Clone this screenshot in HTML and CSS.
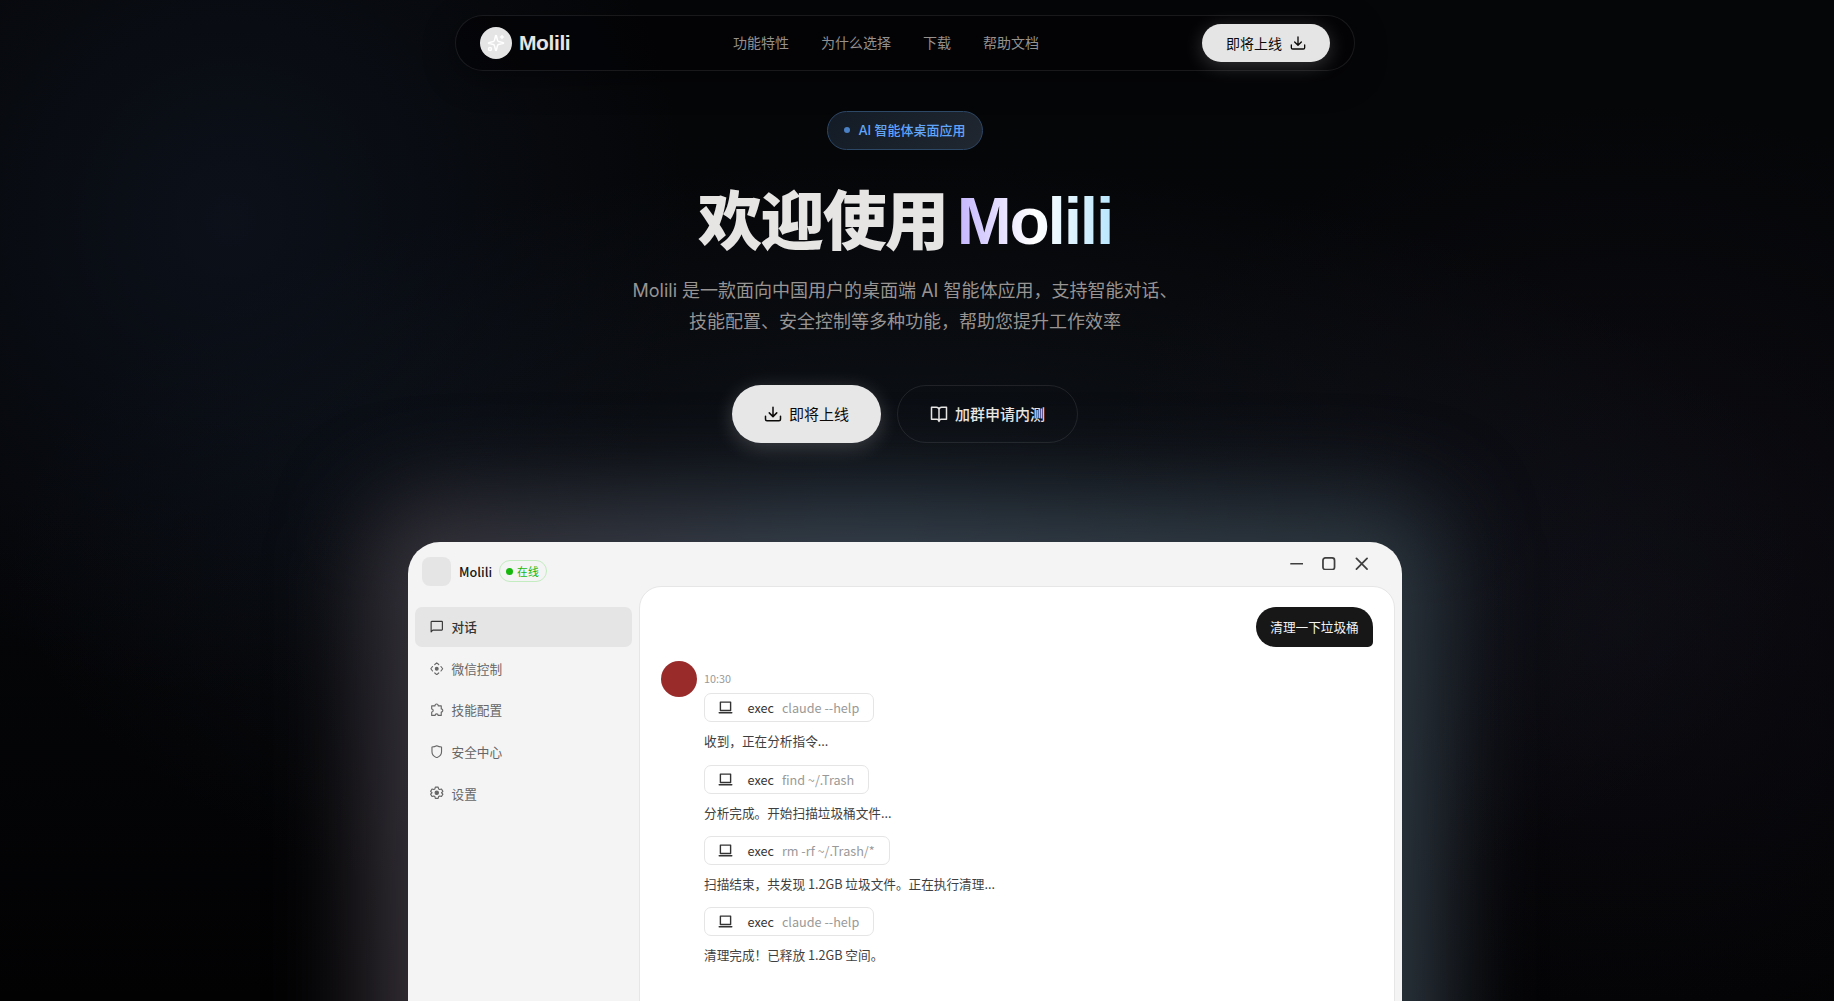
FILE: index.html
```html
<!DOCTYPE html>
<html lang="zh-CN">
<head>
  <meta charset="UTF-8">
  <title>Molili</title>
  <link rel="stylesheet" href="styles.css">
</head>
<body>
  <svg width="0" height="0" class="defs">
    <symbol id="i-download" viewBox="0 0 24 24"><path d="M12 3v12M7 10.5l5 5 5-5M2 15v4a2 2 0 0 0 2 2h16a2 2 0 0 0 2-2v-4"/></symbol>
    <symbol id="i-laptop" viewBox="0 0 16 14"><path d="M2.500 1.200h11v9h-11zM1.200 12.600h13.600"/></symbol>
  </svg>

  <div class="page">
    <header class="header">
      <a class="logo" href="#">
        <span class="logo-mark">
          <svg viewBox="0 0 24 24"><path d="M9.900 15.500A2 2 0 0 0 8.500 14l-6.100-1.500a.5.5 0 0 1 0-1L8.500 10A2 2 0 0 0 9.900 8.500l1.600-6.100a.5.5 0 0 1 1 0L14 8.500a2 2 0 0 0 1.500 1.500l6.100 1.500a.5.5 0 0 1 0 1L15.500 14a2 2 0 0 0-1.500 1.500l-1.500 6.100a.5.5 0 0 1-1 0zM20 2v4M22 4h-4"/><circle cx="4" cy="20" r="2"/></svg>
        </span>
        Molili
      </a>
      <nav class="nav">
        <a href="#">功能特性</a>
        <a href="#">为什么选择</a>
        <a href="#">下载</a>
        <a href="#">帮助文档</a>
      </nav>
      <a class="btn-small" href="#">即将上线 <svg><use href="#i-download"/></svg></a>
    </header>

    <section class="hero">
      <div class="badge"><i></i>AI 智能体桌面应用</div>
      <h1>欢迎使用 <span>Molili</span></h1>
      <p>Molili 是一款面向中国用户的桌面端 AI 智能体应用，支持智能对话、<br>技能配置、安全控制等多种功能，帮助您提升工作效率</p>
      <div class="actions">
        <a class="btn primary" href="#"><svg><use href="#i-download"/></svg>即将上线</a>
        <a class="btn ghost" href="#"><svg viewBox="0 0 24 24"><path d="M12 6v16M12 6a3.500 3.500 0 0 0-3.500-3H2v16h7a3 3 0 0 1 3 3 3 3 0 0 1 3-3h7V3h-6.500A3.500 3.500 0 0 0 12 6z"/></svg>加群申请内测</a>
      </div>
    </section>

    <div class="preview">
      <div class="glow"></div>
      <div class="window">
        <aside class="sidebar">
          <div class="brand">
            <span class="brand-icon"></span>
            <b>Molili</b>
            <span class="status"><i></i>在线</span>
          </div>
          <ul class="menu">
            <li class="active"><svg viewBox="0 0 24 24"><path d="M2 21V3.500A1 1 0 0 1 3 2.500h18a1 1 0 0 1 1 1V17a1 1 0 0 1-1 1H5z"/></svg><span>对话</span></li>
            <li><svg viewBox="0 0 24 24"><path d="M8.500 4.500L12 1.500l3.500 3M8.500 19.500l3.500 3 3.500-3M4.500 8l-3 4 3 4M19.500 8l3 4-3 4"/><circle class="fill" cx="12" cy="12" r="2.500"/></svg><span>微信控制</span></li>
            <li><svg viewBox="0 0 24 24"><path d="M3 5h6a2.800 2.800 0 1 1 5.500 0H20v5.500a2.700 2.700 0 1 1 0 5.400V22h-5.500a2.700 2.700 0 0 0-5.400 0H3v-6a2.700 2.700 0 0 0 0-5.400z"/></svg><span>技能配置</span></li>
            <li><svg viewBox="0 0 24 24"><path d="M12 1.500c3 1.500 6 2 8.500 2V12c0 5-3.500 8.500-8.500 10.500C7 20.500 3.500 17 3.500 12V3.500c2.500 0 5.500-.5 8.500-2z"/></svg><span>安全中心</span></li>
            <li><svg viewBox="0 0 24 24"><path d="M9.500 2h5l.8 3.200 2 1.100 3.100-1 2.500 4.200L20.500 12l2.400 2.500-2.500 4.200-3.100-1-2 1.100-.8 3.200h-5l-.8-3.200-2-1.100-3.100 1-2.500-4.200L3.500 12 1.100 9.500l2.500-4.200 3.100 1 2-1.100z"/><circle class="fill" cx="12" cy="12" r="3"/></svg><span>设置</span></li>
          </ul>
        </aside>
        <div class="content">
          <div class="controls">
            <svg viewBox="0 0 14 14"><path d="M1 7h12"/></svg>
            <svg viewBox="0 0 14 14"><rect x="1" y="1" width="12" height="12" rx="2.500"/></svg>
            <svg viewBox="0 0 14 14"><path d="M1.500 1.500l11 11M12.500 1.500l-11 11"/></svg>
          </div>
          <div class="chat">
            <div class="bubble">清理一下垃圾桶</div>
            <div class="reply">
              <div class="avatar"></div>
              <div class="steps">
                <time>10:30</time>
                <div class="cmd"><svg><use href="#i-laptop"/></svg><b>exec</b>claude --help</div>
                <p>收到，正在分析指令...</p>
                <div class="cmd"><svg><use href="#i-laptop"/></svg><b>exec</b>find ~/.Trash</div>
                <p>分析完成。开始扫描垃圾桶文件...</p>
                <div class="cmd"><svg><use href="#i-laptop"/></svg><b>exec</b>rm -rf ~/.Trash/*</div>
                <p>扫描结束，共发现 1.2GB 垃圾文件。正在执行清理...</p>
                <div class="cmd"><svg><use href="#i-laptop"/></svg><b>exec</b>claude --help</div>
                <p>清理完成！已释放 1.2GB 空间。</p>
              </div>
            </div>
          </div>
        </div>
      </div>
    </div>
  </div>
</body>
</html>
```
FILE: styles.css
```css
* {
  box-sizing: border-box;
}
body {
  margin: 0;
  height: 1001px;
  overflow: hidden;
  font-family: Inter, "Noto Sans CJK SC", sans-serif;
  color: #e7e5e4;
  background:
    radial-gradient(ellipse 460px 480px at 230px 220px, rgba(32, 48, 78, 0.25), transparent),
    radial-gradient(ellipse 560px 520px at 1620px 620px, rgba(60, 50, 80, 0.14), transparent),
    radial-gradient(ellipse 900px 400px at 905px 560px, rgba(60, 80, 105, 0.18), transparent),
    linear-gradient(#050608, #050609 50%, #020203);
}
a {
  color: inherit;
  text-decoration: none;
}
svg {
  fill: none;
  stroke: currentColor;
  stroke-width: 2;
  stroke-linecap: round;
  stroke-linejoin: round;
  flex: none;
}
.defs {
  position: absolute;
}
.page {
  height: 1001px;
  overflow: hidden;
  padding: 15px 24px 0 0;
  display: flex;
  flex-direction: column;
  align-items: center;
}

/* header */
.header {
  flex: none;
  width: 900px;
  height: 56px;
  padding: 0 24px;
  display: grid;
  grid-template-columns: 1fr auto 1fr;
  align-items: center;
  border: 1px solid rgba(255, 255, 255, 0.09);
  border-radius: 28px;
  background: rgba(3, 3, 5, 0.7);
  box-shadow: 0 8px 32px rgba(0, 0, 0, 0.4);
}
.logo {
  display: flex;
  align-items: center;
  gap: 7px;
  font-family: "Liberation Sans", sans-serif;
  font-size: 21px;
  font-weight: 700;
  letter-spacing: -0.4px;
}
.logo-mark {
  width: 32px;
  height: 32px;
  border-radius: 50%;
  background: #e5e5e5;
  color: #fff;
  display: flex;
  align-items: center;
  justify-content: center;
}
.logo-mark svg {
  width: 18px;
  height: 18px;
}
.nav {
  display: flex;
  gap: 32px;
  margin-left: -38px;
  padding-bottom: 2px;
  font-size: 14px;
  color: #94918f;
}
.btn-small {
  justify-self: end;
  height: 38px;
  padding: 0 24px 1px;
  display: flex;
  align-items: center;
  gap: 8px;
  border-radius: 19px;
  background: #e5e5e5;
  color: #0c0a09;
  font-size: 14px;
  box-shadow: 0 4px 20px rgba(255, 255, 255, 0.2);
}
.btn-small svg {
  width: 16px;
  height: 16px;
}

/* hero */
.hero {
  flex: none;
  display: flex;
  flex-direction: column;
  align-items: center;
  text-align: center;
}
.badge {
  margin-top: 40px;
  height: 39px;
  padding: 0 16px 2px;
  display: flex;
  align-items: center;
  gap: 8px;
  border: 1px solid #2d4766;
  border-radius: 20px;
  background: linear-gradient(135deg, #131b26, #202730);
  color: #60a5fa;
  font-size: 13px;
  font-weight: 500;
}
.badge i {
  width: 6px;
  height: 6px;
  border-radius: 50%;
  background: #4a80c4;
}
h1 {
  margin: 36px 0 0;
  font-size: 64px;
  line-height: 70px;
  font-weight: 900;
  letter-spacing: -1.6px;
}
h1 span {
  margin-left: -2px;
  font-family: "Liberation Sans", sans-serif;
  font-size: 66px;
  line-height: 1;
  letter-spacing: -2.2px;
  background: linear-gradient(90deg, #c4b5fd, #fff 50%, #bae6fd);
  -webkit-background-clip: text;
  background-clip: text;
  color: transparent;
}
.hero p {
  margin: 20px 0 0;
  font-size: 18px;
  line-height: 30.6px;
  color: #979493;
}
.actions {
  margin-top: 48px;
  display: flex;
  gap: 16px;
}
.btn {
  height: 58px;
  padding: 0 32px 2px;
  display: flex;
  align-items: center;
  gap: 7px;
  border-radius: 29px;
  font-size: 15px;
}
.btn svg {
  width: 18px;
  height: 18px;
  margin-top: 2px;
}
.primary {
  background: #e7e7e8;
  color: #0c0a09;
  box-shadow: 0 4px 20px rgba(255, 255, 255, 0.2);
}
.ghost {
  border: 1px solid rgba(255, 255, 255, 0.09);
  font-weight: 500;
}

/* app preview */
.preview {
  position: relative;
  z-index: -1;
  flex: none;
  margin-top: 99px;
  width: 994px;
}
.glow {
  position: absolute;
  inset: -44px -42px -50px;
  border-radius: 60px;
  background: linear-gradient(80deg, #352d34, #36414c 50%, #2b353d);
  filter: blur(44px);
}
.window {
  position: relative;
  height: 640px;
  display: flex;
  border-radius: 32px;
  background: #f4f4f4;
  color: #3f3f3f;
  font-family: "Noto Sans CJK SC", sans-serif;
  font-size: 12.65px;
}
.sidebar {
  width: 231px;
  padding: 14px 7px 0 7px;
}
.brand {
  display: flex;
  align-items: center;
  height: 30px;
  padding-left: 7px;
}
.brand-icon {
  width: 29px;
  height: 29px;
  margin-right: 8px;
  border-radius: 8px;
  background: #e5e5e5;
}
.brand b {
  font-weight: 500;
  color: #171717;
}
.status {
  margin-left: 7px;
  height: 22px;
  padding: 0 7px 0 6px;
  display: flex;
  align-items: center;
  gap: 4px;
  border: 1px solid #c3ecc0;
  border-radius: 11px;
  color: #17b80c;
  font-size: 10.8px;
}
.status i {
  width: 7px;
  height: 7px;
  border-radius: 50%;
  background: #17b80c;
}
.menu {
  list-style: none;
  margin: 21px 0 0;
  padding: 0;
}
.menu li {
  height: 40px;
  margin-bottom: 1.6px;
  padding: 0 0 1px 15px;
  display: flex;
  align-items: center;
  gap: 8px;
  border-radius: 7px;
  color: #666;
}
.menu .active {
  background: #e5e5e5;
  color: #333;
  font-weight: 500;
}
.menu svg {
  width: 13.5px;
  height: 13.5px;
}
.fill {
  fill: currentColor;
}
.content {
  flex: 1;
  display: flex;
  flex-direction: column;
  padding-right: 7px;
}
.controls {
  height: 44px;
  padding: 0 27px 1px 0;
  display: flex;
  align-items: center;
  justify-content: flex-end;
  gap: 19px;
}
.controls svg {
  width: 13.5px;
  height: 13.5px;
  stroke-width: 1.8;
}
.chat {
  flex: 1;
  padding: 20px 21px 0 21px;
  border: 1px solid #e6e6e6;
  border-radius: 22px 22px 0 0;
  background: #fff;
}
.bubble {
  width: 117px;
  height: 40px;
  margin-left: auto;
  line-height: 40px;
  text-align: center;
  border-radius: 20px 20px 5px 20px;
  background: #171717;
  color: #f4f4f4;
}
.reply {
  display: flex;
  gap: 7px;
  margin-top: 14px;
}
.avatar {
  width: 36px;
  height: 36px;
  border-radius: 50%;
  background: #992b2b;
}
.steps time {
  display: block;
  height: 32px;
  line-height: 35px;
  font-size: 10.8px;
  color: #999;
}
.cmd {
  width: max-content;
  height: 29px;
  padding: 0 14px 0 13px;
  display: flex;
  align-items: center;
  border: 1px solid #e5e5e5;
  border-radius: 7px;
  color: #999;
}
.cmd svg {
  width: 15px;
  height: 13px;
  margin-right: 14.5px;
  stroke-width: 1.5;
  color: #333;
}
.cmd b {
  margin-right: 8px;
  font-weight: 400;
  color: #333;
}
.steps p {
  margin: 0;
  height: 42.4px;
  line-height: 38px;
}
```
